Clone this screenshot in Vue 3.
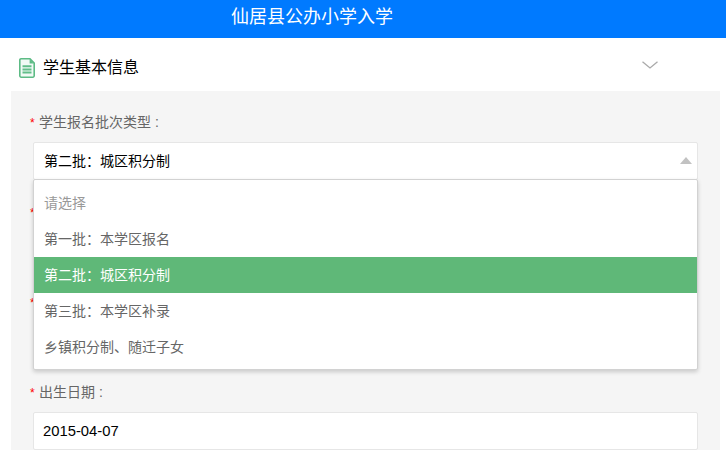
<script setup>
const options = [
  { label: '请选择', tip: true },
  { label: '第一批：本学区报名' },
  { label: '第二批：城区积分制', active: true },
  { label: '第三批：本学区补录' },
  { label: '乡镇积分制、随迁子女' }
]
</script>

<template>
  <div class="page">
    <header class="top-bar">仙居县公办小学入学</header>
    <div class="section-head">
      <svg class="doc-icon" width="16" height="20" viewBox="0 0 16 20">
        <path d="M2 0.8H11L15.2 5V17.8A1.4 1.4 0 0 1 13.8 19.2H2.2A1.4 1.4 0 0 1 0.8 17.8V2A1.2 1.2 0 0 1 2 0.8Z" fill="#f1faf5" stroke="#5dbb85" stroke-width="1.6" />
        <path d="M10.6 1V5.4H15" fill="#5dbb85" />
        <path d="M3.5 8.2H12.5M3.5 11.4H12.5M3.5 14.6H12.5" stroke="#62be8a" stroke-width="2" />
      </svg>
      <span class="section-title">学生基本信息</span>
      <svg class="chevron" width="16" height="8" viewBox="0 0 16 8">
        <path d="M0.5 0.7L8 7L15.5 0.7" fill="none" stroke="#aaa" stroke-width="1.3" />
      </svg>
    </div>
    <div class="panel">
      <div class="form-item">
        <label class="form-label"><i>*</i>学生报名批次类型 :</label>
        <div class="select">
          <div class="field">第二批：城区积分制<span class="arrow"></span></div>
          <ul class="dropdown">
            <li
              v-for="option in options"
              :key="option.label"
              :class="{ tip: option.tip, active: option.active }"
            >{{ option.label }}</li>
          </ul>
        </div>
      </div>
      <div class="form-item">
        <label class="form-label"><i>*</i></label>
        <div class="field"></div>
      </div>
      <div class="form-item">
        <label class="form-label"><i>*</i></label>
        <div class="field"></div>
      </div>
      <div class="form-item">
        <label class="form-label"><i>*</i>出生日期 :</label>
        <div class="field date">2015-04-07</div>
      </div>
    </div>
  </div>
</template>

<style scoped>
.page {
  height: 456px;
  overflow: hidden;
  background: #fff;
  font-family: "Liberation Sans", "Noto Sans CJK SC", sans-serif;
}

.top-bar {
  height: 38px;
  line-height: 34px;
  padding-left: 231px;
  background: #007aff;
  color: #fff;
  font-size: 18px;
}

.section-head {
  display: flex;
  align-items: center;
  height: 53px;
  padding-left: 19px;
}

.doc-icon {
  margin-right: 8px;
  margin-top: 7px;
}

.section-title {
  font-size: 16px;
  color: #000;
  margin-top: 3px;
}

.chevron {
  margin-left: 503px;
  margin-top: 1px;
}

.panel {
  margin: 0 6px 0 11px;
  padding: 20px 22px 0 19px;
  background: #f5f5f5;
}

.form-item {
  margin-bottom: 21px;
}

.form-label {
  display: block;
  height: 20px;
  line-height: 22px;
  margin-bottom: 11px;
  font-size: 14px;
  color: #666;
  white-space: nowrap;
}

.form-label i {
  display: inline-block;
  width: 9px;
  font-size: 12px;
  font-style: normal;
  color: #f00;
}

.select {
  position: relative;
}

.field {
  position: relative;
  box-sizing: border-box;
  height: 38px;
  line-height: 36px;
  margin-left: 3px;
  padding-left: 10px;
  border: 1px solid #e6e6e6;
  border-radius: 2px;
  background: #fff;
  font-size: 14px;
  color: #000;
}

.date {
  padding-left: 9px;
  font-size: 14.8px;
}

.arrow {
  position: absolute;
  right: 5px;
  top: 14px;
  border-left: 6px solid transparent;
  border-right: 6px solid transparent;
  border-bottom: 7px solid #c2c2c2;
}

.dropdown {
  position: absolute;
  z-index: 5;
  top: 37px;
  left: 3px;
  right: 0;
  box-sizing: border-box;
  height: 191px;
  margin: 0;
  padding: 5px 0;
  list-style: none;
  border: 1px solid #d2d2d2;
  border-radius: 2px;
  background: #fff;
  box-shadow: 0 2px 4px rgba(0, 0, 0, 0.18);
}

.dropdown li {
  height: 36px;
  line-height: 36px;
  padding-left: 10px;
  font-size: 14px;
  color: #666;
}

.dropdown .tip {
  color: #999;
}

.dropdown .active {
  background: #5fb878;
  color: #fff;
}
</style>
